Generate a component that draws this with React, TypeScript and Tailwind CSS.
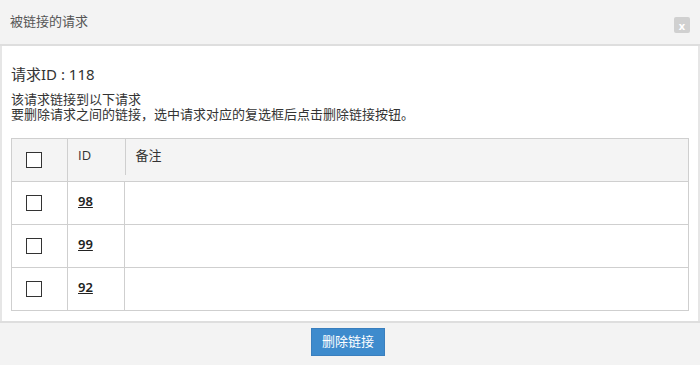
const rows = ["98", "99", "92"];

function Box() {
  return <span className="block h-4 w-4 border-[1.5px] border-[#333] bg-white" />;
}

export default function App() {
  return (
    <div className="flex h-[365px] w-[700px] flex-col bg-white font-['Noto_Sans','Noto_Sans_CJK_SC',sans-serif] text-[#333]">
      {/* Header */}
      <div className="flex h-[46px] shrink-0 items-center justify-between border-b-2 border-[#dedede] bg-[#f3f3f3] px-[10px]">
        <span className="text-[13px] text-[#555]">被链接的请求</span>
        <button className="mt-[6px] flex h-4 w-4 items-center justify-center rounded-[2px] bg-[#d0d0d0] text-[11px] font-bold leading-none text-white">
          x
        </button>
      </div>

      {/* Body */}
      <div className="flex-1 border-x-2 border-[#e6e6e6] px-[9px] pt-[18px]">
        <div className="text-[15px] leading-5">请求ID : 118</div>
        <div className="mt-[8px] text-[13px] leading-[15px]">
          <p>该请求链接到以下请求</p>
          <p>要删除请求之间的链接，选中请求对应的复选框后点击删除链接按钮。</p>
        </div>

        <table className="mt-[16px] w-[678px] border-collapse border border-[#cfcfcf] text-[13px]">
          <thead>
            <tr className="h-[43px] bg-[#f4f4f4]">
              <th className="w-[56px] border-r border-[#cfcfcf] pl-[14px] text-left align-middle">
                <Box />
              </th>
              <th className="w-[57px] px-[10px] text-left align-top font-['Open_Sans','Noto_Sans_CJK_SC',sans-serif] font-normal">
                <div className="pt-[6px] leading-5">ID</div>
              </th>
              <th className="text-left align-top font-normal">
                <div className="h-[36px] border-l border-[#cfcfcf] pl-[10px] pt-[6px] leading-5">备注</div>
              </th>
            </tr>
          </thead>
          <tbody>
            {rows.map((id) => (
              <tr key={id} className="h-[43px] border-t border-[#cfcfcf]">
                <td className="border-r border-[#cfcfcf] pl-[14px] align-middle">
                  <Box />
                </td>
                <td className="border-r border-[#cfcfcf] px-[10px] align-top">
                  <a href="#" className="block pt-[9px] font-semibold leading-5 text-[#222] underline">
                    {id}
                  </a>
                </td>
                <td></td>
              </tr>
            ))}
          </tbody>
        </table>
      </div>

      {/* Footer */}
      <div className="flex h-[44px] shrink-0 justify-center border-t-2 border-[#dedede] bg-[#f3f3f3] pt-[5px]">
        <button className="ml-[-4px] h-[28px] w-[74px] border border-[#3a7fbe] bg-[#3e8bcd] text-[13px] text-white">
          删除链接
        </button>
      </div>
    </div>
  );
}
